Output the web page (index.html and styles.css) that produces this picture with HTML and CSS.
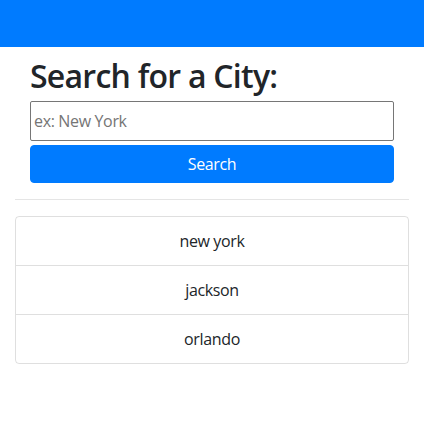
FILE: index.html
```html
<!DOCTYPE html>
<html lang="en">
<head>
<meta charset="utf-8">
<title>Weather Search</title>
<link rel="stylesheet" href="styles.css">
</head>
<body>
<header class="topbar"></header>
<main class="page">
  <section class="search">
    <h2 class="title">Search for a City:</h2>
    <input class="city-input" type="text" placeholder="ex: New York">
    <button class="search-btn" type="button">Search</button>
  </section>
  <hr class="divider">
  <ul class="history">
    <li class="history-item">new york</li>
    <li class="history-item">jackson</li>
    <li class="history-item">orlando</li>
  </ul>
</main>
</body>
</html>
```
FILE: styles.css
```css
* { box-sizing: border-box; }
html, body { margin: 0; padding: 0; background: #fff; }
body {
  font-family: "Open Sans", "Noto Sans", sans-serif;
  font-size: 16px;
  line-height: 1.5;
  color: #212529;
  letter-spacing: -0.35px;
}
.topbar {
  height: 47px;
  background: #007bff;
}
.page {
  padding: 0 15px;
}
.search {
  padding: 10px 15px 0;
  display: flex;
  flex-direction: column;
}
.title {
  margin: 0 0 6px;
  font-size: 32px;
  font-weight: 600;
  line-height: 1.2;
  letter-spacing: -0.75px;
}
.city-input {
  height: 40px;
  width: 100%;
  margin: 0;
  padding: 1px 3px;
  border: 1px solid #767676;
  border-radius: 2px;
  font-family: inherit;
  font-size: 16px;
  letter-spacing: -0.35px;
  color: #212529;
}
.city-input::placeholder { color: #757575; }
.search-btn {
  margin-top: 4px;
  height: 38px;
  width: 100%;
  border: 1px solid #007bff;
  border-radius: 4px;
  background: #007bff;
  color: #fff;
  font-family: inherit;
  font-size: 16px;
  line-height: 1.5;
  letter-spacing: -0.35px;
}
.divider {
  margin: 16px 0;
  border: 0;
  border-top: 1px solid rgba(0,0,0,0.1);
}
.history {
  list-style: none;
  margin: 0;
  padding: 0;
  border: 1px solid rgba(0,0,0,0.125);
  border-radius: 4px;
}
.history-item {
  padding: 12px 20px;
  text-align: center;
  border-top: 1px solid rgba(0,0,0,0.125);
}
.history-item:first-child { border-top: 0; }
```
